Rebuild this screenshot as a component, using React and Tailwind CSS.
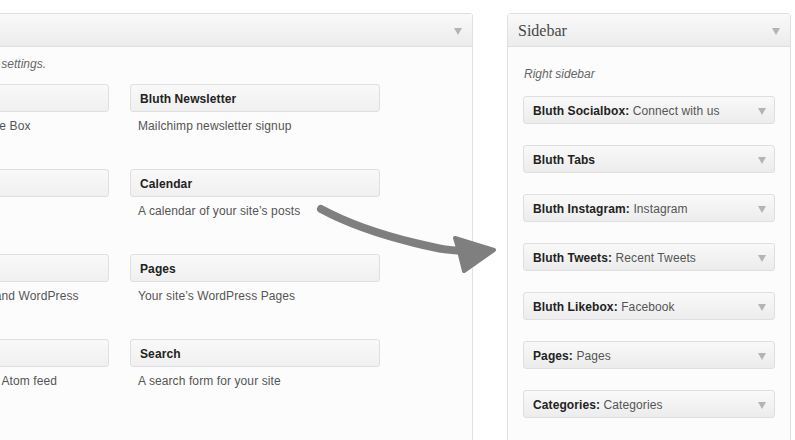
import React from "react";

const sans = { fontFamily: '"Liberation Sans", Arial, sans-serif' };

function Tri({ className = "" }) {
  return (
    <svg width="8" height="7" viewBox="0 0 8 7" className={className}>
      <polygon points="0,0 8,0 4,7" fill="#b4b4b4" />
    </svg>
  );
}

function AvailWidget({ title, desc }) {
  return (
    <div className="w-[250px] h-[85px]">
      <div className="h-[28px] rounded-[3px] border border-[#dfdfdf] bg-gradient-to-b from-[#f9f9f9] to-[#f0f0f0] flex items-center pl-[9px] pt-[2px]">
        <span className="text-[12px] font-bold text-[#222] tracking-[0.1px] whitespace-nowrap">{title}</span>
      </div>
      <div className="pl-[8px] pt-[6px] text-[12px] leading-[16px] text-[#555] tracking-[0.1px] whitespace-nowrap">
        {desc}
      </div>
    </div>
  );
}

function SideWidget({ name, title }) {
  return (
    <div className="h-[28px] mb-[21px] rounded-[3px] border border-[#dfdfdf] bg-gradient-to-b from-[#f9f9f9] to-[#ececec] flex items-center pl-[9px] pr-[8px] pt-[2px]">
      <span className="flex-1 text-[12px] tracking-[0.1px] whitespace-nowrap">
        <span className="font-bold text-[#222]">{name}</span>
        {title ? <span className="text-[#555]">{" "}{title}</span> : null}
      </span>
      <Tri />
    </div>
  );
}

export default function App() {
  const left = [
    ["Bluth Likebox", "Displays a Facebook Like Box"],
    ["Bluth Tabs", "Tabbed widgets"],
    ["Meta", "Log in/out, admin, feed and WordPress"],
    ["RSS", "Entries from any RSS or Atom feed"],
  ];
  const right = [
    ["Bluth Newsletter", "Mailchimp newsletter signup"],
    ["Calendar", "A calendar of your site\u2019s posts"],
    ["Pages", "Your site\u2019s WordPress Pages"],
    ["Search", "A search form for your site"],
  ];
  const side = [
    ["Bluth Socialbox:", "Connect with us"],
    ["Bluth Tabs", ""],
    ["Bluth Instagram:", "Instagram"],
    ["Bluth Tweets:", "Recent Tweets"],
    ["Bluth Likebox:", "Facebook"],
    ["Pages:", "Pages"],
    ["Categories:", "Categories"],
  ];
  return (
    <div className="relative w-[795px] h-[440px] overflow-hidden bg-white" style={sans}>
      <div className="flex items-start pt-[13px]">
        {/* Available widgets panel (cut off on left) */}
        <div className="ml-[-170px] w-[643px] shrink-0 border border-[#dfdfdf] rounded-t-[3px] bg-[#fcfcfc]">
          <div className="h-[33px] border-b border-[#dfdfdf] bg-gradient-to-b from-[#f9f9f9] to-[#ececec] flex items-center justify-end pr-[10px] pt-[2px]">
            <Tri />
          </div>
          <div className="h-[420px] pl-[28px] pt-[9px]">
            <div className="w-[187px] flex justify-end h-[16px] mb-[12px]">
              <span className="text-[12px] leading-[16px] italic text-[#666] whitespace-nowrap">
                Drag widgets back here to deactivate them and delete their settings.
              </span>
            </div>
            <div className="flex gap-[21px]">
              <div className="flex flex-col">
                {left.map(([t, d]) => (
                  <AvailWidget key={t} title={t} desc={d} />
                ))}
              </div>
              <div className="flex flex-col">
                {right.map(([t, d]) => (
                  <AvailWidget key={t} title={t} desc={d} />
                ))}
              </div>
            </div>
          </div>
        </div>

        {/* Sidebar panel */}
        <div className="ml-[34px] w-[284px] shrink-0 border border-[#dfdfdf] rounded-t-[3px] bg-[#fcfcfc]">
          <div className="h-[33px] border-b border-[#dfdfdf] bg-gradient-to-b from-[#f9f9f9] to-[#ececec] flex items-center pl-[10px] pr-[10px] pt-[2px]">
            <span
              className="flex-1 text-[16px] text-[#464646]"
              style={{ fontFamily: '"Liberation Serif", Georgia, serif' }}
            >
              Sidebar
            </span>
            <Tri />
          </div>
          <div className="h-[420px] px-[15px] pt-[19px]">
            <div className="pl-[1px] text-[12px] leading-[16px] italic text-[#666] mb-[14px]">Right sidebar</div>
            {side.map(([n, t]) => (
              <SideWidget key={n} name={n} title={t} />
            ))}
          </div>
        </div>
      </div>

      {/* hand-drawn arrow */}
      <svg className="absolute inset-0 pointer-events-none" width="795" height="440" viewBox="0 0 795 440">
        <path
          d="M321 209 C 345 222, 378 234, 415 243 S 452 250, 468 251"
          fill="none"
          stroke="#7f7f7f"
          strokeWidth="8"
          strokeLinecap="round"
          strokeLinejoin="round"
        />
        <polygon
          points="455,238 494,250 464,271 460,255"
          fill="#7f7f7f"
          stroke="#7f7f7f"
          strokeWidth="4"
          strokeLinejoin="round"
        />
      </svg>
    </div>
  );
}
